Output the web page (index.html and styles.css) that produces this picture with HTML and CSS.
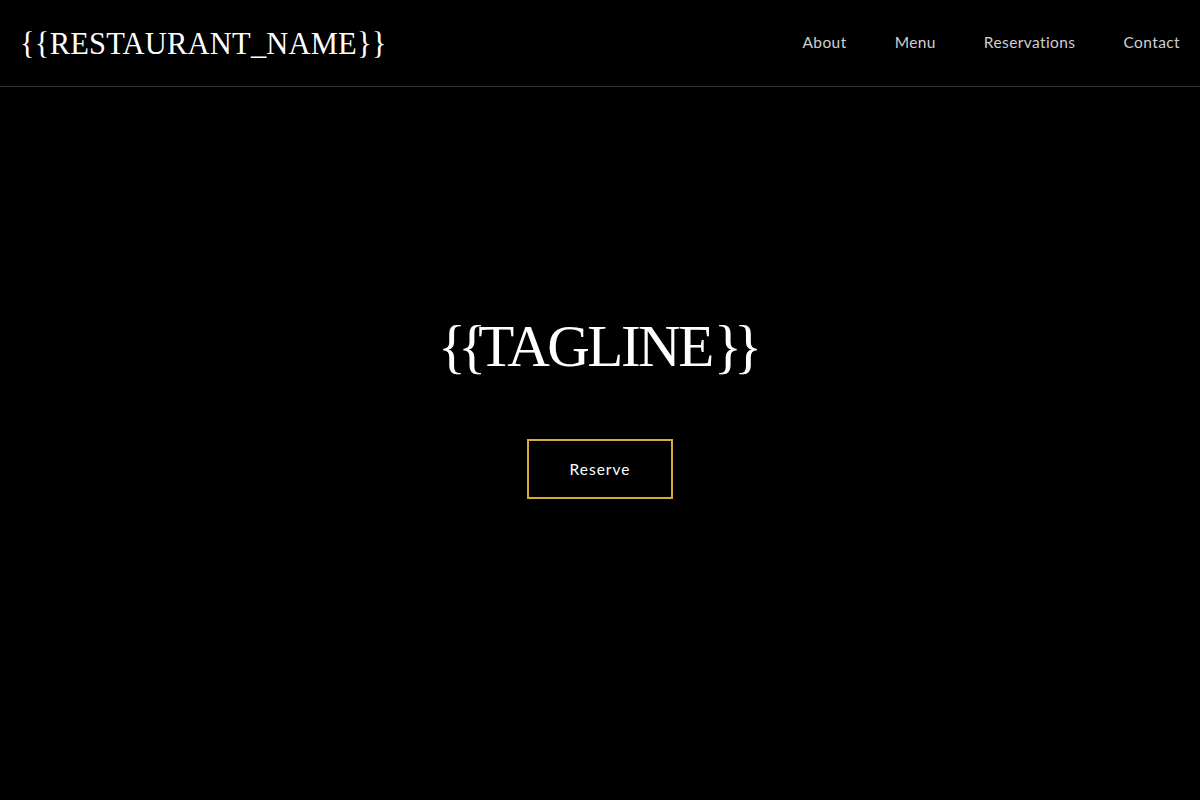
FILE: index.html
```html
<!DOCTYPE html>
<html lang="en">
<head>
<meta charset="utf-8">
<title>{{RESTAURANT_NAME}}</title>
<link rel="stylesheet" href="styles.css">
</head>
<body>
<header class="site-header">
  <a class="logo" href="#">{{RESTAURANT_NAME}}</a>
  <nav class="nav">
    <a href="#">About</a>
    <a href="#">Menu</a>
    <a href="#">Reservations</a>
    <a href="#">Contact</a>
  </nav>
</header>
<main class="hero">
  <h1 class="tagline"><span class="brace">{{</span>TAGLINE<span class="brace brace-end">}}</span></h1>
  <a class="btn" href="#">Reserve</a>
</main>
</body>
</html>
```
FILE: styles.css
```css
* { box-sizing: border-box; }
html, body { margin: 0; padding: 0; background: #000; color: #fff; }
body { height: 800px; overflow: hidden; }
a { text-decoration: none; color: inherit; }

.site-header {
  height: 87px;
  border-bottom: 1px solid #333;
  display: flex;
  align-items: center;
  justify-content: space-between;
  padding: 0 20px;
}
.logo {
  font-family: "Liberation Serif", "DejaVu Serif", serif;
  font-size: 30.5px;
  letter-spacing: 0.2px;
  color: #fff;
  margin-top: 2px;
}
.nav {
  display: flex;
  gap: 48px;
  font-family: "Lato", "Noto Sans", sans-serif;
  font-size: 15.5px;
  letter-spacing: 0.4px;
  margin-top: -2px;
}
.nav a { color: #cfcfcf; }

.hero {
  display: flex;
  flex-direction: column;
  align-items: center;
  padding-top: 219px;
}
.tagline {
  margin: 0;
  font-family: "Liberation Serif", "DejaVu Serif", serif;
  font-weight: 400;
  font-size: 59px;
  letter-spacing: -2.5px;
  line-height: 80px;
  color: #fff;
}
.brace { letter-spacing: -8px; }
.brace-end { margin-left: 2px; margin-right: 8px; }
.btn {
  margin-top: 53px;
  width: 146px;
  height: 60px;
  border: 2px solid #d4aa3a;
  display: flex;
  align-items: center;
  justify-content: center;
  font-family: "Lato", "Noto Sans", sans-serif;
  font-size: 15.5px;
  letter-spacing: 1px;
  color: #fff;
}
```
